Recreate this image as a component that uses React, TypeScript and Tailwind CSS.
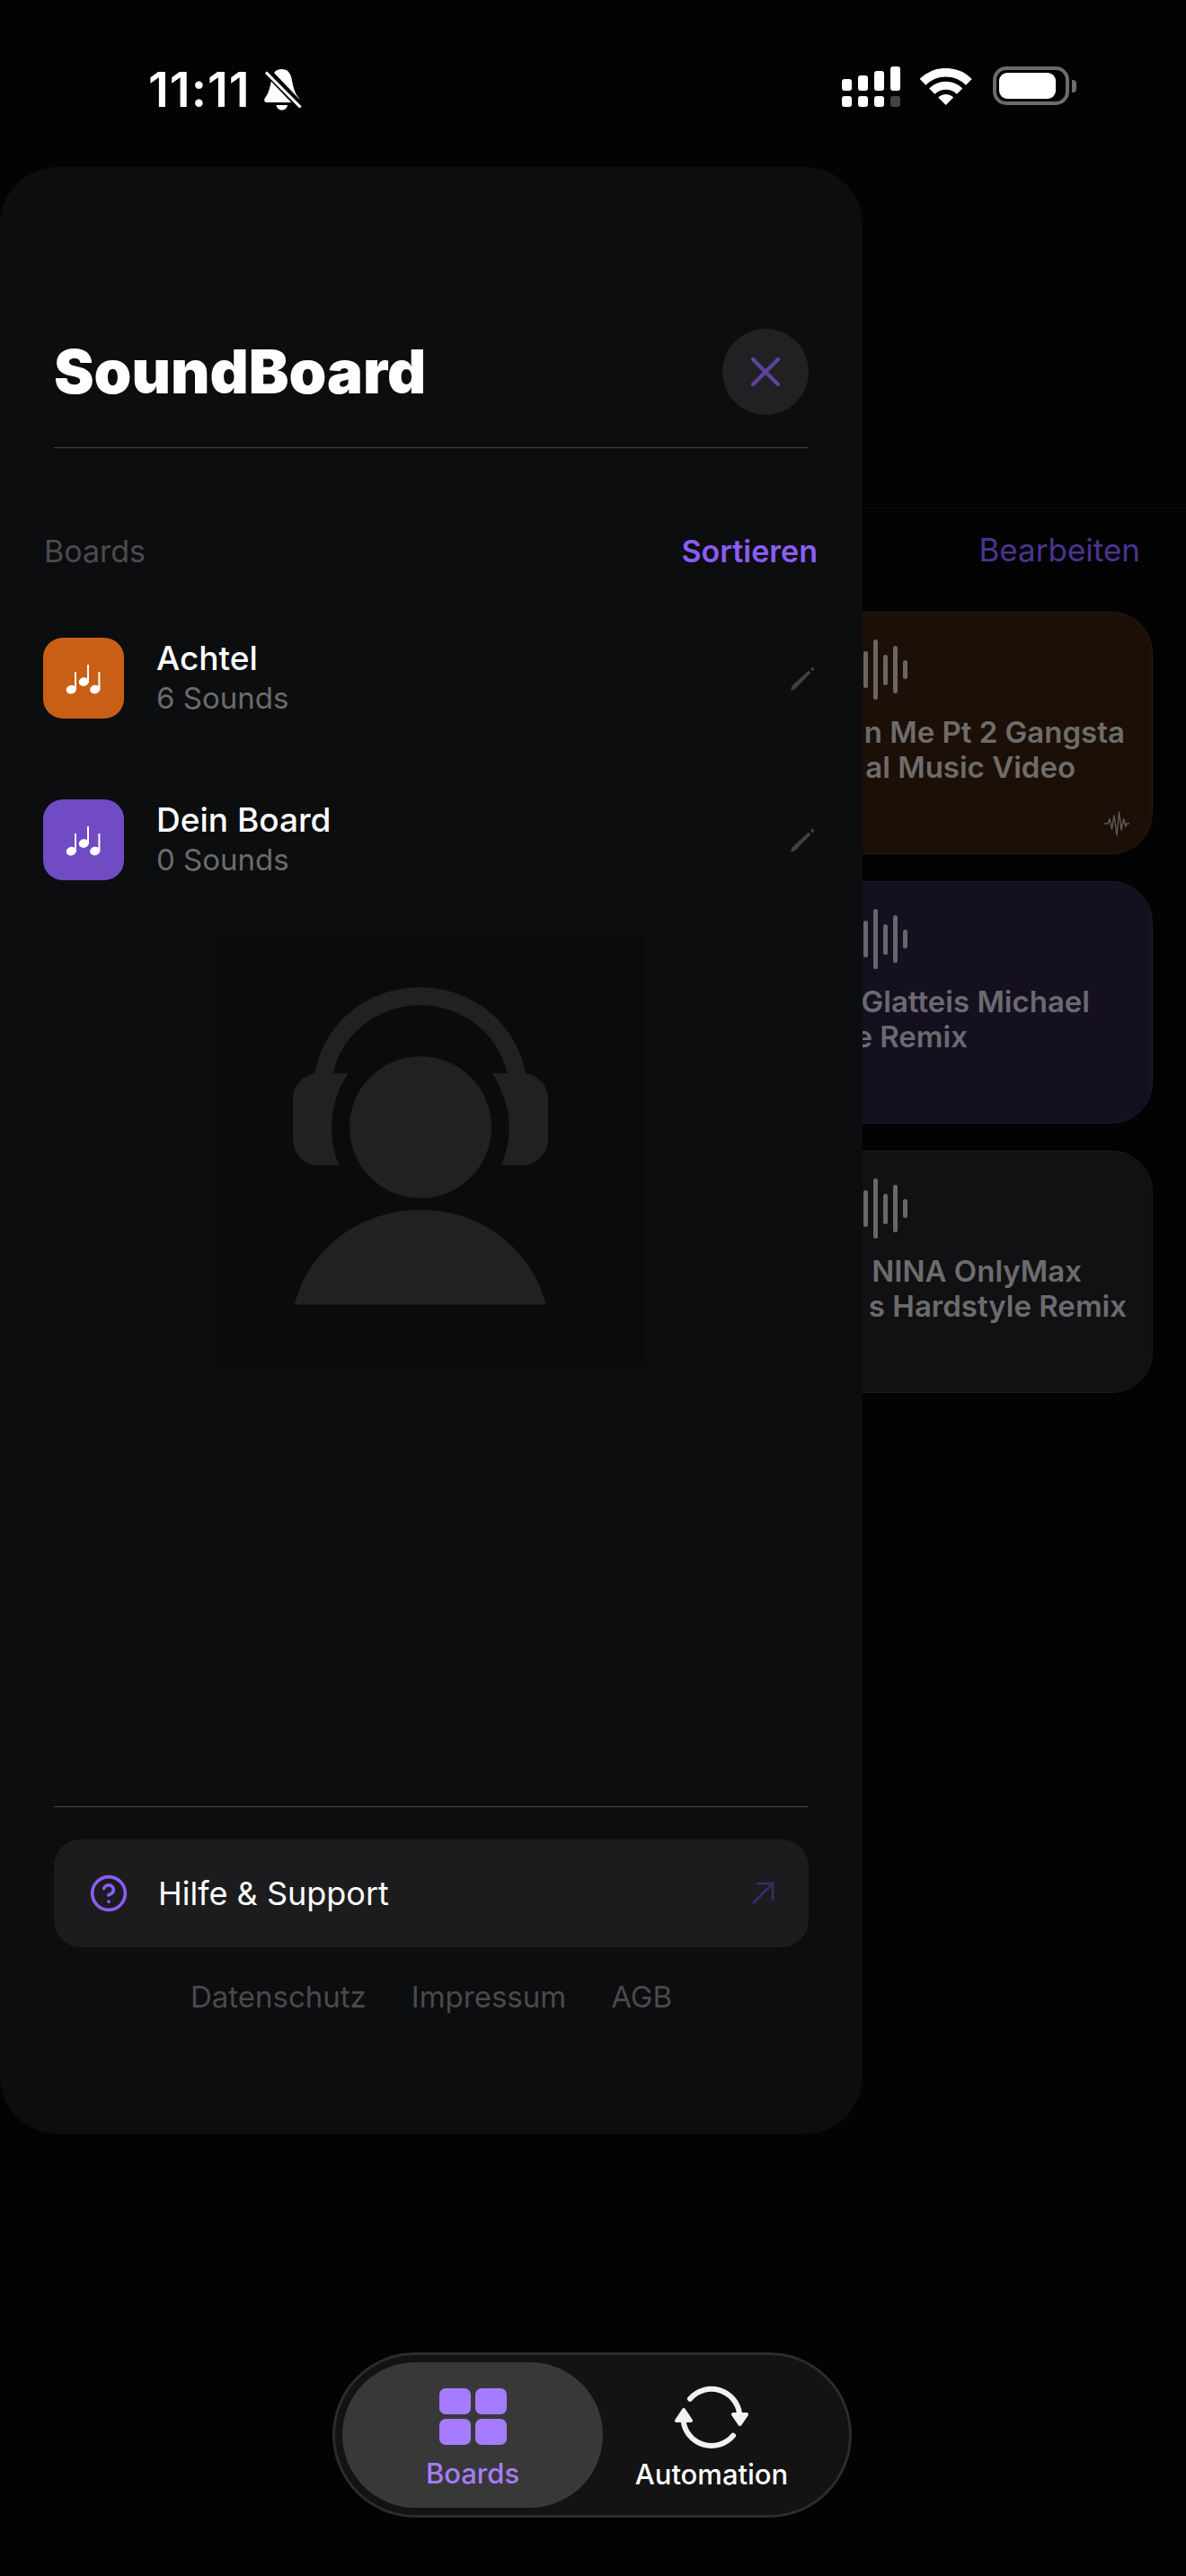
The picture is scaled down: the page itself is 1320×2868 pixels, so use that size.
import { CircleHelp } from 'lucide-react';

const boards = [
  { name: 'Achtel', count: '6 Sounds', color: 'bg-[#c95f16]' },
  { name: 'Dein Board', count: '0 Sounds', color: 'bg-[#714bc4]' },
];

const sounds = [
  {
    card: 'bg-[#1c0f08] border-[#2c190c]',
    bars: 'bg-[#6a6663]',
    text: 'text-[#6f6c6a]',
    lines: [
      { label: 'n Me Pt 2 Gangsta', pad: 'pr-[30px]' },
      { label: 'al Music Video', pad: 'pr-[85px]' },
    ],
    badge: true,
  },
  {
    card: 'bg-[#14101f] border-[#1d1833]',
    bars: 'bg-[#68666c]',
    text: 'text-[#6b6a70]',
    lines: [
      { label: 'Glatteis Michael', pad: 'pr-[69px]' },
      { label: 'e Remix', pad: 'pr-[205px]' },
    ],
    badge: false,
  },
  {
    card: 'bg-[#111114] border-[#1b1b1e]',
    bars: 'bg-[#68686a]',
    text: 'text-[#6c6c6e]',
    lines: [
      { label: 'NINA OnlyMax', pad: 'pr-[78px]' },
      { label: 's Hardstyle Remix', pad: 'pr-[28px]' },
    ],
    badge: false,
  },
];

function StatusBar() {
  return (
    <div className="flex h-[186px] items-start justify-between pl-[165px] pr-[122px] pt-[74px]">
      <div className="flex items-center gap-[14px]">
        <span className="text-[54px] leading-[44px] font-semibold tracking-[1px] text-white">11:11</span>
        <svg width="44" height="50" viewBox="0 0 44 50" className="mt-[2px]">
          <path d="M20.5 1C27 1 30 5 31.5 11C33 20 35 28 39.5 33C41 35.5 40 38 37 38H4C1 38 .5 35 2 33C6 28 8 20 9.5 11C11 5 14 1 20.5 1Z" fill="#fff" />
          <path d="M14.5 41H27C26.5 44.5 24 46.5 20.8 46.5C17.5 46.5 15 44.5 14.5 41Z" fill="#fff" />
          <path d="M1 0L43 44" stroke="#040404" strokeWidth="9" />
          <path d="M3 4.5L41.5 43.5" stroke="#fff" strokeWidth="3.2" />
        </svg>
      </div>
      <div className="flex items-start">
        <div className="flex flex-col gap-[6px]">
          <div className="flex h-[27px] items-end gap-[7px]">
            <div className="h-[13px] w-[11px] rounded-[3px] bg-white" />
            <div className="h-[17px] w-[11px] rounded-[3px] bg-white" />
            <div className="h-[22px] w-[11px] rounded-[3px] bg-white" />
            <div className="h-[27px] w-[11px] rounded-[3px] bg-white" />
          </div>
          <div className="flex h-[12px] gap-[7px]">
            <div className="w-[11px] rounded-[3px] bg-white" />
            <div className="w-[11px] rounded-[3px] bg-white" />
            <div className="w-[11px] rounded-[3px] bg-white" />
            <div className="w-[11px] rounded-[3px] bg-[#444]" />
          </div>
        </div>
        <svg width="58" height="42" viewBox="0 0 58 42" fill="none" className="ml-[22px] mt-[2px]">
          <path d="M3 15.3A36.3 36.3 0 0 1 54.4 15.3" stroke="#fff" strokeWidth="9.5" />
          <path d="M13.3 25.6A21.8 21.8 0 0 1 44.1 25.6" stroke="#fff" strokeWidth="9" />
          <path d="M28.7 41L20.2 32.5A12 12 0 0 1 37.2 32.5Z" fill="#fff" />
        </svg>
        <div className="ml-[23px] flex items-center">
          <div className="h-[43px] w-[85px] rounded-[15px] border-[4px] border-[#6c6c6c] p-[3px]">
            <div className="h-full w-[63px] rounded-[9px] bg-white" />
          </div>
          <div className="ml-[3px] h-[14px] w-[5px] rounded-r-[4px] bg-[#6c6c6c]" />
        </div>
      </div>
    </div>
  );
}

function WaveBars({ color }: { color: string }) {
  const heights = ['h-[41px]', 'h-[67px]', 'h-[34px]', 'h-[53px]', 'h-[21px]'];
  return (
    <div className="flex h-[67px] items-center justify-end gap-[6px]">
      {heights.map((h) => (
        <div key={h} className={`w-[5px] rounded-full ${h} ${color}`} />
      ))}
    </div>
  );
}

function SoundCards() {
  return (
    <div className="flex flex-col gap-[30px] pl-[700px] pr-[37px]">
      {sounds.map((s) => (
        <div key={s.lines[0].label} className={`relative h-[270px] rounded-[46px] border pt-[30px] ${s.card}`}>
          <div className="pr-[272px]">
            <WaveBars color={s.bars} />
          </div>
          <div className={`mt-[17px] whitespace-nowrap text-right text-[33px] leading-[39px] font-semibold ${s.text}`}>
            {s.lines.map((l) => (
              <div key={l.label} className={l.pad}>{l.label}</div>
            ))}
          </div>
          {s.badge && (
            <svg width="30" height="28" viewBox="0 0 30 28" fill="none" className="absolute bottom-[19px] right-[24px]">
              <path
                d="M1 14H5L7 9L9.5 20L12 5L15 27L17.5 1L20 21L22.5 9L25 17L26 14H29"
                stroke="#5f5a56"
                strokeWidth="1.4"
                strokeLinejoin="round"
              />
            </svg>
          )}
        </div>
      ))}
    </div>
  );
}

function Notes() {
  return (
    <svg width="90" height="90" viewBox="0 0 90 90" fill="#fff">
      <ellipse cx="31.3" cy="57.7" rx="5.6" ry="4.8" transform="rotate(-15 31.3 57.7)" />
      <rect x="35" y="38" width="2" height="20" />
      <ellipse cx="45.3" cy="49" rx="5.6" ry="4.8" transform="rotate(-15 45.3 49)" />
      <rect x="49" y="30" width="2" height="20" />
      <ellipse cx="57.7" cy="57.5" rx="5.6" ry="4.8" transform="rotate(-15 57.7 57.5)" />
      <rect x="61.4" y="38" width="2" height="20" />
    </svg>
  );
}

function BoardRow({ name, count, color }: { name: string; count: string; color: string }) {
  return (
    <div className="flex h-[90px] items-center">
      <div className={`h-[90px] w-[90px] rounded-[22px] ${color}`}>
        <Notes />
      </div>
      <div className="ml-[36px] flex-1">
        <div className="text-[37px] leading-[44px] font-medium text-white">{name}</div>
        <div className="text-[33px] leading-[44px] text-[#6b6b6e]">{count}</div>
      </div>
      <svg width="30" height="28" viewBox="0 0 30 28" className="mr-[1px] mt-[2px]">
        <path d="M2 27L3.5 21.5L22 4.5L24.5 7L7 25Z" fill="#404042" />
        <path d="M24 2.5L26 .5L28.5 3L26.5 5.5Z" fill="#404042" />
      </svg>
    </div>
  );
}

function Listener() {
  return (
    <svg width="480" height="480" viewBox="0 0 480 480" fill="#212123">
      <path d="M110.7 155C120 100 168 59.3 227.7 59.3C287 59.3 335 100 345 155C359 157 370 169 370 183.3V228.3C370 244 357 257.3 341.7 257.3H317.7C323 246 326.7 231 326.7 215C326.7 193 319 172 307.7 155H324.7C315 111 275 79.3 227.7 79.3C180 79.3 140 111 131 155H147.7C136 172 129 193 129 215C129 231 132 246 137.7 257.3H113.3C98 257.3 86 244 86 228.3V183.3C86 169 97 157 110.7 155Z" />
      <circle cx="228" cy="215" r="79" />
      <path d="M87.7 412.5C104 350 160 307 228 307C296 307 351 350 367.7 412.5Z" />
    </svg>
  );
}

function Drawer() {
  return (
    <div className="absolute left-0 top-[186px] flex h-[2190px] w-[960px] flex-col rounded-[64px] bg-[#0c0d0e]">
      <div className="mx-[60px] flex h-[313px] items-start justify-between border-b border-[#48484a] pt-[180px]">
        <h1 className="text-[67px] leading-[96px] font-black text-white">SoundBoard</h1>
        <button className="flex h-[96px] w-[96px] items-center justify-center rounded-full bg-[#212123]">
          <svg width="32" height="32" viewBox="0 0 32 32" stroke="#5b4399" strokeWidth="4.5" strokeLinecap="round">
            <path d="M2 2L30 30M30 2L2 30" />
          </svg>
        </button>
      </div>

      <div className="flex items-center justify-between pl-[49px] pr-[50px] pt-[93px] text-[34px] leading-[44px]">
        <span className="text-[#4b4b4e]">Boards</span>
        <span className="font-semibold text-[#8b5cf6]">Sortieren</span>
      </div>

      <div className="mt-[74px] flex flex-col gap-[90px] pl-[48px] pr-[51px]">
        {boards.map((b) => (
          <BoardRow key={b.name} {...b} />
        ))}
      </div>

      <div className="mx-auto mt-[60px] h-[480px] w-[480px] bg-[#0a0b0c]">
        <Listener />
      </div>

      <div className="mx-[60px] mt-[491px] border-t border-[#48484a] pt-[36px]">
        <div className="flex h-[120px] items-center rounded-[30px] bg-[#1c1c1e] pl-[39px] pr-[38px]">
          <CircleHelp size={44} strokeWidth={2} color="#8b5cf6" />
          <span className="ml-[33px] flex-1 text-[36px] text-white">Hilfe &amp; Support</span>
          <svg width="26" height="26" viewBox="0 0 26 26" fill="none" stroke="#3a2c66" strokeWidth="2.6">
            <path d="M2 24L24 2M6 2H24V21" />
          </svg>
        </div>
      </div>

      <div className="mt-[33px] flex justify-center gap-[50px] text-[33px] leading-[44px] text-[#4a4a4d]">
        <span>Datenschutz</span>
        <span>Impressum</span>
        <span>AGB</span>
      </div>
    </div>
  );
}

function TabBar() {
  return (
    <div className="absolute bottom-[65px] left-[370px] flex h-[184px] w-[578px] items-center rounded-[92px] border-[3px] border-[#2c2c2c] bg-[#131313] pl-[8px]">
      <div className="flex h-[162px] w-[290px] flex-col items-center rounded-[81px] bg-[#383838] pt-[29px]">
        <div className="grid grid-cols-[35px_35px] grid-rows-[29px_29px] gap-x-[5px] gap-y-[5px]">
          <div className="rounded-[7px] bg-[#a67cff]" />
          <div className="rounded-[7px] bg-[#a67cff]" />
          <div className="rounded-[7px] bg-[#a67cff]" />
          <div className="rounded-[7px] bg-[#a67cff]" />
        </div>
        <span className="mt-[14px] text-[31px] leading-[36px] font-medium text-[#a67cff]">Boards</span>
      </div>
      <div className="flex h-[162px] w-[242px] flex-col items-center pt-[22px]">
        <svg width="90" height="78" viewBox="0 0 90 78" fill="none" stroke="#f2f2f2" strokeWidth="6" strokeLinecap="round" strokeLinejoin="round">
          <path d="M21 18.7A31.5 31.5 0 0 1 76 35" />
          <path d="M69 59.7A31.5 31.5 0 0 1 13.5 43" />
          <path d="M69 36H84L76.5 47Z" fill="#f2f2f2" strokeWidth="4" />
          <path d="M6 43H22L14 31Z" fill="#f2f2f2" strokeWidth="4" />
        </svg>
        <span className="mt-[7px] text-[31px] leading-[36px] font-medium text-white">Automation</span>
      </div>
    </div>
  );
}

export default function App() {
  return (
    <div className="relative h-[2868px] w-[1320px] overflow-hidden bg-[#030303] font-[Inter,sans-serif]">
      <StatusBar />
      <div className="h-[380px] border-b border-[#070707]" />
      <div className="flex h-[115px] items-start justify-end pr-[51px] pt-[24px]">
        <span className="text-[35px] leading-[44px] text-[#4a3490]">Bearbeiten</span>
      </div>
      <SoundCards />
      <Drawer />
      <TabBar />
    </div>
  );
}
